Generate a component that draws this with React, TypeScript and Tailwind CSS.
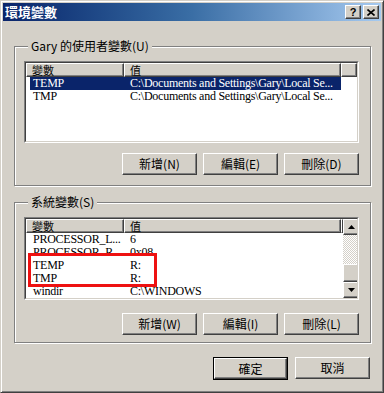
import React from "react";

const latin = { fontFamily: '"Liberation Serif", "Noto Sans CJK TC", serif' };
const cjk = { fontFamily: '"Noto Sans CJK TC", "Liberation Sans", sans-serif' };

type Row = { name: string; value: string; selected?: boolean };

const userVars: Row[] = [
  { name: "TEMP", value: "C:\\Documents and Settings\\Gary\\Local Se...", selected: true },
  { name: "TMP", value: "C:\\Documents and Settings\\Gary\\Local Se..." },
];

const raised =
  "border border-t-white border-l-white border-r-[#404040] border-b-[#404040] shadow-[inset_-1px_-1px_0_#808080] bg-[#d4d0c8]";

const WinButton = ({ label, width = "w-[75px]", isDefault = false }: { label: React.ReactNode; width?: string; isDefault?: boolean }) => (
  <div className={isDefault ? `${width} h-[23px] border border-black` : `${width} h-[22px]`}>
    <div className={`h-full w-full flex items-center justify-center text-[12px] text-black ${raised}`} style={cjk}>
      {label}
    </div>
  </div>
);

const ListRow = ({ row }: { row: Row }) => (
  <div className="flex h-[13px] leading-[13px] text-[12px] tracking-[-0.25px] whitespace-nowrap" style={latin}>
    <div className={`flex ml-[4px] ${row.selected ? "bg-[#0a246a] text-white" : "text-black"}`}>
      <div className="w-[94px] pl-[3px] overflow-hidden">{row.name}</div>
      <div className="w-[217px] pl-[6px] overflow-hidden">{row.value}</div>
    </div>
  </div>
);

const Header = () => (
  <div className="flex h-[14px] text-[11px] leading-[12px] text-black" style={cjk}>
    <div className={`w-[98px] pl-[5px] ${raised}`}>變數</div>
    <div className={`w-[217px] pl-[5px] ${raised}`}>值</div>
    <div className={`flex-1 ${raised}`} />
  </div>
);

const Arrow = ({ up }: { up?: boolean }) => (
  <div className={`w-[16px] h-[16px] flex items-center justify-center ${raised}`}>
    <svg width="7" height="4" viewBox="0 0 7 4">
      <path d={up ? "M3.5 0 L7 4 L0 4 Z" : "M0 0 L7 0 L3.5 4 Z"} fill="#000" />
    </svg>
  </div>
);

const Group = ({ title, children, className = "" }: { title: React.ReactNode; children: React.ReactNode; className?: string }) => (
  <fieldset
    className={`w-[357px] border border-[#808080] shadow-[inset_1px_1px_0_#fff,1px_1px_0_#fff] pl-[9px] pt-[8px] ${className}`}
  >
    <legend className="ml-[4px] px-[3px] h-[14px] leading-[14px] text-[12px] text-black bg-[#d4d0c8]" style={cjk}>
      {title}
    </legend>
    {children}
  </fieldset>
);

const ListBox = ({ children, height }: { children: React.ReactNode; height: string }) => (
  <div className={`w-[335px] ${height} border border-t-[#808080] border-l-[#808080] border-r-white border-b-white`}>
    <div className="h-full w-full border border-t-[#404040] border-l-[#404040] border-r-[#d4d0c8] border-b-[#d4d0c8] bg-white overflow-hidden">
      {children}
    </div>
  </div>
);

const ButtonRow = ({ labels }: { labels: string[] }) => (
  <div className="w-[335px] flex justify-end gap-[6px]">
    {labels.map((l) => (
      <WinButton key={l} label={l} />
    ))}
  </div>
);

export default function App() {
  return (
    <div className="w-[384px] h-[393px] bg-[#d4d0c8] border border-t-[#d4d0c8] border-l-[#d4d0c8] border-r-[#404040] border-b-[#404040] overflow-hidden">
      <div className="h-full w-full p-[2px] shadow-[inset_1px_1px_0_#fff,inset_-1px_-1px_0_#808080]">
        {/* title bar */}
        <div className="h-[18px] flex items-center bg-gradient-to-r from-[#0a246a] via-[#3a6ea5] to-[#a6caf0] pl-[2px] pr-[2px]">
          <span className="text-white font-bold text-[13px] leading-[18px]" style={cjk}>
            環境變數
          </span>
          <div className="ml-auto flex gap-[2px]">
            <div className={`w-[16px] h-[14px] flex items-center justify-center text-[11px] font-bold leading-none text-black ${raised}`} style={{ fontFamily: '"Liberation Sans", sans-serif' }}>
              ?
            </div>
            <div className={`w-[16px] h-[14px] flex items-center justify-center ${raised}`}>
              <svg width="8" height="7" viewBox="0 0 8 7">
                <path d="M0.5 0.5 L7.5 6.5 M7.5 0.5 L0.5 6.5" stroke="#000" strokeWidth="1.6" />
              </svg>
            </div>
          </div>
        </div>

        <div className="pl-[11px]">
          <Group title="Gary 的使用者變數(U)" className="mt-[18px] pb-[10px]">
            <ListBox height="h-[82px]">
              <Header />
              {userVars.map((r) => (
                <ListRow key={r.name} row={r} />
              ))}
            </ListBox>
            <div className="mt-[10px]">
              <ButtonRow labels={["新增(N)", "編輯(E)", "刪除(D)"]} />
            </div>
          </Group>

          <Group title="系統變數(S)" className="mt-[9px] pb-[7px]">
            <ListBox height="h-[83px]">
              <div className="flex h-full">
                <div className="flex-1">
                  <Header />
                  <ListRow row={{ name: "PROCESSOR_L...", value: "6" }} />
                  <ListRow row={{ name: "PROCESSOR_R...", value: "0x08" }} />
                  <div className="relative -mt-[6px] pt-[6px] bg-white">
                    <ListRow row={{ name: "TEMP", value: "R:" }} />
                    <ListRow row={{ name: "TMP", value: "R:" }} />
                    <div className="absolute left-[2px] top-0 w-[129px] h-[34px] border-[3px] border-[#ee1111]" />
                  </div>
                  <ListRow row={{ name: "windir", value: "C:\\WINDOWS" }} />
                </div>
                <div className="w-[16px] flex flex-col">
                  <Arrow up />
                  <div className="flex-1 bg-[repeating-conic-gradient(#ffffff_0_25%,#d4d0c8_0_50%)] bg-[length:2px_2px]" />
                  <div className={`h-[18px] ${raised}`} />
                  <Arrow />
                </div>
              </div>
            </ListBox>
            <div className="mt-[13px]">
              <ButtonRow labels={["新增(W)", "編輯(I)", "刪除(L)"]} />
            </div>
          </Group>

          <div className="w-[357px] mt-[14px] flex justify-end gap-[7px] pr-[1px]">
            <WinButton label="確定" isDefault />
            <WinButton label="取消" width="w-[75px]" />
          </div>
        </div>
      </div>
    </div>
  );
}
